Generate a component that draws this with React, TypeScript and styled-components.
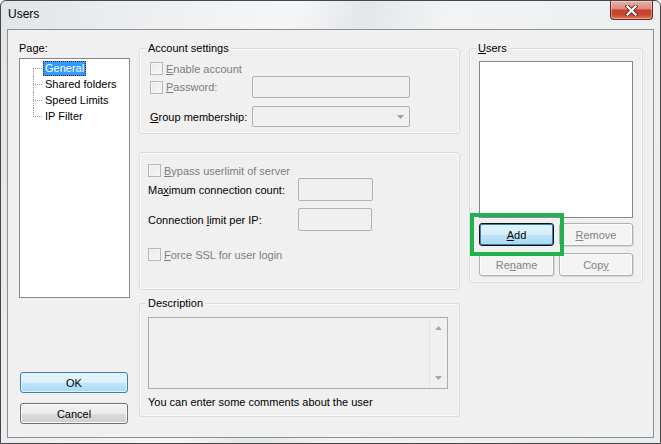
import styled, { createGlobalStyle, css } from "styled-components";

const GlobalStyle = createGlobalStyle`
  html, body {
    margin: 0;
    padding: 0;
    background: #ffffff;
  }
  body {
    font-family: "Liberation Sans", Arial, sans-serif;
    font-size: 11px;
    color: #000;
  }
`;

const Window = styled.div`
  width: 661px;
  height: 444px;
  box-sizing: border-box;
  border: 1px solid #474747;
  border-radius: 6px 6px 0 0;
  background: linear-gradient(
    105deg,
    #e2e5e8 0%,
    #eef0f2 22%,
    #f5f6f7 38%,
    #e4e7ea 47%,
    #f1f3f4 58%,
    #eaedef 100%
  );
  display: flex;
  flex-direction: column;
  overflow: hidden;
`;

const TitleBar = styled.div`
  height: 28px;
  flex: none;
  display: flex;
  justify-content: space-between;
  align-items: flex-start;
  padding: 0 7px 0 7px;
`;

const Title = styled.div`
  margin-top: 6px;
  font-size: 12px;
  line-height: 14px;
  color: #000;
`;

const CloseButton = styled.div`
  width: 43px;
  height: 19px;
  box-sizing: border-box;
  border: 1px solid #6b2a20;
  border-top: none;
  border-radius: 0 0 4px 4px;
  background: linear-gradient(
    #eab1a6 0%,
    #dc8c7e 42%,
    #c9442f 50%,
    #c9452f 75%,
    #de7a58 100%
  );
  box-shadow: inset 0 0 0 1px rgba(255, 255, 255, 0.35);
  display: flex;
  align-items: center;
  justify-content: center;
`;

const Client = styled.div`
  margin-left: 6px;
  width: 647px;
  height: 409px;
  box-sizing: border-box;
  border: 1px solid #8e8f8f;
  background: #f0f0f0;
  display: flex;
  align-items: flex-start;
  gap: 9px;
  padding: 0 10px 0 11px;
`;

const Column = styled.div<{ $w: number; $top?: number }>`
  width: ${(p) => p.$w}px;
  flex: none;
  display: flex;
  flex-direction: column;
  margin-top: ${(p) => p.$top ?? 0}px;
`;

const Caption = styled.div<{ $top?: number; $disabled?: boolean }>`
  line-height: 14px;
  margin-top: ${(p) => p.$top ?? 0}px;
  color: ${(p) => (p.$disabled ? "#7d7d7d" : "#000")};
  white-space: nowrap;
`;

const Key = styled.span`
  text-decoration: underline;
  text-underline-offset: 1px;
`;

const TreeBox = styled.div`
  margin-top: 3px;
  height: 240px;
  box-sizing: border-box;
  border: 1px solid #828790;
  background: #fff;
  padding-top: 1px;
`;

const TreeRow = styled.div`
  display: flex;
  align-items: center;
  height: 16px;
  padding-left: 13px;
`;

const Branch = styled.span<{ $pos: "first" | "mid" | "last" }>`
  position: relative;
  width: 10px;
  height: 16px;
  flex: none;

  &::before {
    content: "";
    position: absolute;
    left: 0;
    top: 8px;
    width: 9px;
    border-top: 1px dotted #9a9a9a;
  }

  &::after {
    content: "";
    position: absolute;
    left: 0;
    border-left: 1px dotted #9a9a9a;
    ${(p) =>
      p.$pos === "first"
        ? css`
            top: 8px;
            bottom: 0;
          `
        : p.$pos === "last"
        ? css`
            top: 0;
            height: 9px;
          `
        : css`
            top: 0;
            bottom: 0;
          `}
  }
`;

const TreeLabel = styled.span<{ $selected?: boolean }>`
  line-height: 15px;
  padding: 0 2px;
  white-space: nowrap;
  ${(p) =>
    p.$selected &&
    css`
      background: #3399ff;
      color: #fff;
      outline: 1px dotted #3a2a10;
      outline-offset: -1px;
    `}
`;

const Group = styled.div<{ $h: number; $top: number; $pad: string }>`
  position: relative;
  height: ${(p) => p.$h}px;
  margin-top: ${(p) => p.$top}px;
  box-sizing: border-box;
  border: 1px solid #d5dfe5;
  border-radius: 3px;
  box-shadow: inset 0 0 0 1px rgba(255, 255, 255, 0.6);
  padding: ${(p) => p.$pad};
  display: flex;
  flex-direction: column;
`;

const Legend = styled.div`
  position: absolute;
  top: -8px;
  left: 6px;
  padding: 0 2px;
  line-height: 14px;
  background: #f0f0f0;
  white-space: nowrap;
`;

const Row = styled.div<{ $h: number; $top?: number }>`
  display: flex;
  align-items: center;
  height: ${(p) => p.$h}px;
  margin-top: ${(p) => p.$top ?? 0}px;
`;

const LabelCell = styled.div<{ $w: number }>`
  width: ${(p) => p.$w}px;
  flex: none;
  display: flex;
  align-items: center;
`;

const CheckBox = styled.span`
  width: 13px;
  height: 13px;
  flex: none;
  box-sizing: border-box;
  border: 1px solid #b8b8b8;
  background: linear-gradient(135deg, #e9e9e9, #f7f7f7);
  box-shadow: inset 0 0 0 1px #f4f4f4;
  margin-right: 3px;
`;

const Input = styled.div<{ $w: number; $h: number }>`
  width: ${(p) => p.$w}px;
  height: ${(p) => p.$h}px;
  box-sizing: border-box;
  border: 1px solid #b0b3b6;
  border-radius: 2px;
  background: #f0f0f0;
  position: relative;
  display: flex;
  align-items: center;
  justify-content: flex-end;
`;

const ComboArrow = styled.svg`
  margin-right: 5px;
`;

const TextArea = styled.div`
  width: 300px;
  height: 72px;
  box-sizing: border-box;
  border: 1px solid #abadb3;
  background: #f0f0f0;
  display: flex;
  justify-content: flex-end;
`;

const ScrollBar = styled.div`
  width: 17px;
  border-left: 1px solid #e4e4e4;
  display: flex;
  flex-direction: column;
  justify-content: space-between;
  align-items: center;
  padding: 8px 0 8px;
`;

const ListBox = styled.div`
  width: 154px;
  height: 157px;
  box-sizing: border-box;
  border: 1px solid #828790;
  background: #fff;
`;

const ButtonGrid = styled.div`
  display: grid;
  grid-template-columns: 75px 74px;
  grid-auto-rows: 23px;
  column-gap: 5px;
  row-gap: 7px;
  margin-top: 5px;
`;

type Variant = "normal" | "default" | "pressed" | "disabled";

const Button = styled.div<{ $variant?: Variant; $h?: number; $top?: number }>`
  height: ${(p) => p.$h ?? 23}px;
  margin-top: ${(p) => p.$top ?? 0}px;
  box-sizing: border-box;
  border-radius: 3px;
  display: flex;
  align-items: center;
  justify-content: center;
  line-height: 14px;
  border: 1px solid #707070;
  background: linear-gradient(#f2f2f2 0%, #ebebeb 50%, #dddddd 51%, #cfcfcf 100%);
  box-shadow: inset 0 0 0 1px #fcfcfc;
  color: #000;

  ${(p) =>
    p.$variant === "default" &&
    css`
      border-color: #3c7fb1;
      background: linear-gradient(#eaf6fd 0%, #d9f0fc 50%, #bee6fd 51%, #a7d9f5 100%);
      box-shadow: inset 0 0 0 1px #dff2fc;
    `}

  ${(p) =>
    p.$variant === "pressed" &&
    css`
      border-color: #111;
      background: linear-gradient(#e5f4fc 0%, #d4edfb 50%, #bfe3f8 51%, #a9d8f3 100%);
      box-shadow: inset 0 0 0 1px #3c7fb1;
    `}

  ${(p) =>
    p.$variant === "disabled" &&
    css`
      border-color: #adb2b5;
      background: #f4f4f4;
      box-shadow: inset 0 0 0 1px #fbfbfb, 1px 1px 0 #d8d8d8;
      color: #838383;
    `}
`;

const Spotlight = styled.div`
  position: relative;
`;

const Highlight = styled.div`
  position: absolute;
  left: -9px;
  top: -10px;
  width: 94px;
  height: 43px;
  box-sizing: border-box;
  border: 4px solid #22b14c;
  pointer-events: none;
`;

const Arrow = ({ dir }: { dir: "up" | "down" }) => (
  <svg width="7" height="4" viewBox="0 0 7 4">
    <path
      d={dir === "up" ? "M0 4 L3.5 0 L7 4 Z" : "M0 0 L3.5 4 L7 0 Z"}
      fill="#a6a6a6"
    />
  </svg>
);

const pages = ["General", "Shared folders", "Speed Limits", "IP Filter"];

const App = () => {
  return (
    <>
      <GlobalStyle />
      <Window>
        <TitleBar>
          <Title>Users</Title>
          <CloseButton>
            <svg width="13" height="11" viewBox="0 0 13 11">
              <path
                d="M2.5 1.5 L10.5 9.5 M10.5 1.5 L2.5 9.5"
                stroke="#5c2a24"
                strokeWidth="4"
                strokeLinecap="square"
              />
              <path
                d="M2.5 1.5 L10.5 9.5 M10.5 1.5 L2.5 9.5"
                stroke="#ffffff"
                strokeWidth="2.2"
                strokeLinecap="square"
              />
            </svg>
          </CloseButton>
        </TitleBar>

        <Client>
          <Column $w={111}>
            <Caption $top={11}>Page:</Caption>
            <TreeBox>
              {pages.map((p, i) => (
                <TreeRow key={p}>
                  <Branch
                    $pos={i === 0 ? "first" : i === pages.length - 1 ? "last" : "mid"}
                  />
                  <TreeLabel $selected={i === 0}>{p}</TreeLabel>
                </TreeRow>
              ))}
            </TreeBox>
            <Button $variant="default" $h={21} $top={74} style={{ marginLeft: 1, width: 108 }}>
              OK
            </Button>
            <Button $h={21} $top={10} style={{ marginLeft: 1, width: 108 }}>
              Cancel
            </Button>
          </Column>

          <Column $w={321}>
            <Group $h={86} $top={18} $pad="12px 0 0 10px">
              <Legend>Account settings</Legend>
              <Row $h={15}>
                <CheckBox />
                <Caption $disabled>
                  <Key>E</Key>nable account
                </Caption>
              </Row>
              <Row $h={22}>
                <LabelCell $w={102}>
                  <CheckBox />
                  <Caption $disabled>
                    <Key>P</Key>assword:
                  </Caption>
                </LabelCell>
                <Input $w={158} $h={22} />
              </Row>
              <Row $h={21} $top={8}>
                <LabelCell $w={102}>
                  <Caption>
                    <Key>G</Key>roup membership:
                  </Caption>
                </LabelCell>
                <Input $w={158} $h={21}>
                  <ComboArrow width="7" height="4" viewBox="0 0 7 4">
                    <path d="M0 0 L3.5 4 L7 0 Z" fill="#a0a0a0" />
                  </ComboArrow>
                </Input>
              </Row>
            </Group>

            <Group $h={138} $top={18} $pad="10px 0 0 8px">
              <Row $h={15}>
                <CheckBox />
                <Caption $disabled>
                  <Key>B</Key>ypass userlimit of server
                </Caption>
              </Row>
              <Row $h={23}>
                <LabelCell $w={150}>
                  <Caption>
                    Ma<Key>x</Key>imum connection count:
                  </Caption>
                </LabelCell>
                <Input $w={75} $h={23} />
              </Row>
              <Row $h={23} $top={7}>
                <LabelCell $w={150}>
                  <Caption>
                    Connection <Key>l</Key>imit per IP:
                  </Caption>
                </LabelCell>
                <Input $w={74} $h={23} />
              </Row>
              <Row $h={15} $top={16}>
                <CheckBox />
                <Caption $disabled>
                  <Key>F</Key>orce SSL for user login
                </Caption>
              </Row>
            </Group>

            <Group $h={114} $top={13} $pad="13px 0 0 8px">
              <Legend>Description</Legend>
              <TextArea>
                <ScrollBar>
                  <Arrow dir="up" />
                  <Arrow dir="down" />
                </ScrollBar>
              </TextArea>
              <Caption $top={6}>You can enter some comments about the user</Caption>
            </Group>
          </Column>

          <Column $w={174}>
            <Group $h={235} $top={18} $pad="12px 0 0 9px">
              <Legend>
                <Key>U</Key>sers
              </Legend>
              <ListBox />
              <ButtonGrid>
                <Spotlight>
                  <Button $variant="pressed">
                    <span>
                      <Key>A</Key>dd
                    </span>
                  </Button>
                  <Highlight />
                </Spotlight>
                <Button $variant="disabled">
                  <span>
                    <Key>R</Key>emove
                  </span>
                </Button>
                <Button $variant="disabled">
                  <span>
                    Re<Key>n</Key>ame
                  </span>
                </Button>
                <Button $variant="disabled">
                  <span>
                    Cop<Key>y</Key>
                  </span>
                </Button>
              </ButtonGrid>
            </Group>
          </Column>
        </Client>
      </Window>
    </>
  );
};

export default App;
